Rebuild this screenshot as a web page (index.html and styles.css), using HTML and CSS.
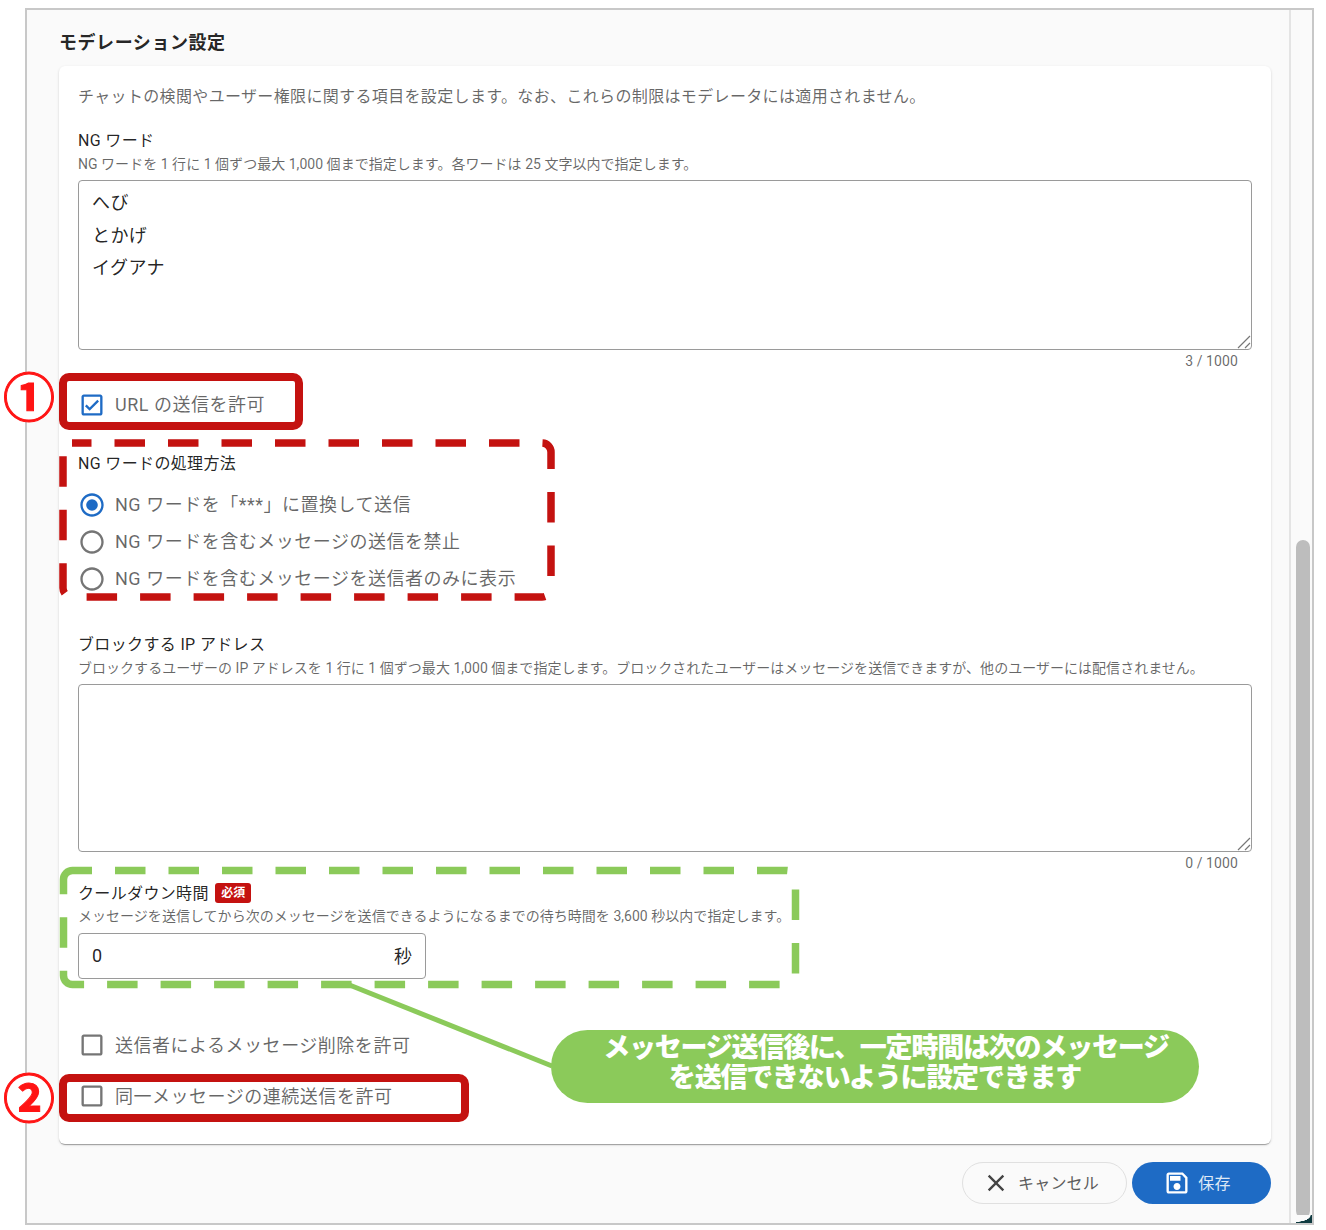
FILE: index.html
```html
<!DOCTYPE html>
<html lang="ja">
<head>
  <meta charset="UTF-8" />
  <meta name="viewport" content="width=device-width, initial-scale=1.0"/>
  <title>モデレーション設定</title>
  <link rel="stylesheet" href="styles.css">
</head>
<body>

  <div class="frame">
    <div class="main">
      <h2 class="page-title">モデレーション設定</h2>

      <div class="card">
        <p class="desc">チャットの検閲やユーザー権限に関する項目を設定します。なお、これらの制限はモデレータには適用されません。</p>

        <div class="field-label first-label">NG ワード</div>
        <div class="help">NG ワードを 1 行に 1 個ずつ最大 1,000 個まで指定します。各ワードは 25 文字以内で指定します。</div>
        <div class="box-wrap">
          <textarea class="text-box ng-box">へび
とかげ
イグアナ</textarea>
          <svg class="grip" viewBox="0 0 14 14"><path d="M1 13 13 1M8 13l5-5"/></svg>
        </div>
        <div class="counter">3 / 1000</div>

        <label class="option url-option">
          <svg class="icon blue" viewBox="0 0 24 24"><path d="M19 3H5c-1.1 0-2 .9-2 2v14c0 1.1.9 2 2 2h14c1.1 0 2-.9 2-2V5c0-1.1-.9-2-2-2zm0 16H5V5h14v14zM17.99 9l-1.41-1.42-6.59 6.59-2.58-2.57-1.42 1.41 4 3.99z"/></svg>
          <span>URL の送信を許可</span>
        </label>

        <div class="field-label method-label">NG ワードの処理方法</div>
        <div class="radios">
          <label class="option radio">
            <svg class="icon blue" viewBox="0 0 24 24"><path d="M12 2C6.48 2 2 6.48 2 12s4.48 10 10 10 10-4.48 10-10S17.52 2 12 2zm0 18c-4.42 0-8-3.58-8-8s3.58-8 8-8 8 3.58 8 8-3.58 8-8 8z"/><circle cx="12" cy="12" r="5"/></svg>
            <span>NG ワードを「***」に置換して送信</span>
          </label>
          <label class="option radio">
            <svg class="icon" viewBox="0 0 24 24"><path d="M12 2C6.48 2 2 6.48 2 12s4.48 10 10 10 10-4.48 10-10S17.52 2 12 2zm0 18c-4.42 0-8-3.58-8-8s3.58-8 8-8 8 3.58 8 8-3.58 8-8 8z"/></svg>
            <span>NG ワードを含むメッセージの送信を禁止</span>
          </label>
          <label class="option radio">
            <svg class="icon" viewBox="0 0 24 24"><path d="M12 2C6.48 2 2 6.48 2 12s4.48 10 10 10 10-4.48 10-10S17.52 2 12 2zm0 18c-4.42 0-8-3.58-8-8s3.58-8 8-8 8 3.58 8 8-3.58 8-8 8z"/></svg>
            <span>NG ワードを含むメッセージを送信者のみに表示</span>
          </label>
        </div>

        <div class="field-label ip-label">ブロックする IP アドレス</div>
        <div class="help">ブロックするユーザーの IP アドレスを 1 行に 1 個ずつ最大 1,000 個まで指定します。ブロックされたユーザーはメッセージを送信できますが、他のユーザーには配信されません。</div>
        <div class="box-wrap">
          <textarea class="text-box ip-box"></textarea>
          <svg class="grip" viewBox="0 0 14 14"><path d="M1 13 13 1M8 13l5-5"/></svg>
        </div>
        <div class="counter">0 / 1000</div>

        <div class="field-label cooldown-label">クールダウン時間 <span class="required">必須</span></div>
        <div class="help cooldown-help">メッセージを送信してから次のメッセージを送信できるようになるまでの待ち時間を 3,600 秒以内で指定します。</div>
        <div class="number-box"><span>0</span><span>秒</span></div>

        <label class="option delete-option">
          <svg class="icon" viewBox="0 0 24 24"><path d="M19 5v14H5V5h14m0-2H5c-1.1 0-2 .9-2 2v14c0 1.1.9 2 2 2h14c1.1 0 2-.9 2-2V5c0-1.1-.9-2-2-2z"/></svg>
          <span>送信者によるメッセージ削除を許可</span>
        </label>
        <label class="option repeat-option">
          <svg class="icon" viewBox="0 0 24 24"><path d="M19 5v14H5V5h14m0-2H5c-1.1 0-2 .9-2 2v14c0 1.1.9 2 2 2h14c1.1 0 2-.9 2-2V5c0-1.1-.9-2-2-2z"/></svg>
          <span>同一メッセージの連続送信を許可</span>
        </label>
      </div>

      <div class="actions">
        <button class="btn btn-cancel">
          <svg class="icon" viewBox="0 0 24 24"><path d="M19 6.41 17.59 5 12 10.59 6.41 5 5 6.41 10.59 12 5 17.59 6.41 19 12 13.41 17.59 19 19 17.59 13.41 12z"/></svg>
          <span>キャンセル</span>
        </button>
        <button class="btn btn-save">
          <svg class="icon" viewBox="0 0 24 24"><path d="M17 3H5c-1.11 0-2 .9-2 2v14c0 1.1.89 2 2 2h14c1.1 0 2-.9 2-2V7l-4-4zm2 16H5V5h11.17L19 7.83V19zm-7-7c-1.66 0-3 1.34-3 3s1.34 3 3 3 3-1.34 3-3-1.34-3-3-3zM6 6h9v4H6z"/></svg>
          <span>保存</span>
        </button>
      </div>
    </div>

    <div class="scroll-track"><div class="scroll-thumb"></div></div>
    <div class="corner"></div>
  </div>

  <!-- annotations drawn on top of the screenshot -->
  <svg class="marks" width="1326" height="1230" viewBox="0 0 1326 1230">
    <line class="green-line" x1="347" y1="984" x2="552" y2="1066"/>
    <rect class="dash-red" x="63" y="443" width="488" height="154" rx="9"/>
    <rect class="dash-green" x="63.500" y="870.500" width="732" height="114" rx="9"/>
  </svg>
  <div class="solid-box box-one"></div>
  <div class="solid-box box-two"></div>
  <div class="num num-one">①</div>
  <div class="num num-two">②</div>
  <div class="callout"><span class="callout-first">メッセージ送信後に、一定時間は次のメッセージ</span><br>を送信できないように設定できます</div>

</body>
</html>
```

FILE: styles.css
```css
:root {
  --text: rgba(0, 0, 0, 0.87);
  --muted: rgba(0, 0, 0, 0.6);
  --blue: #1e6bc5;
  --red: #c41210;
  --green: #8bca5a;
}

* {
  box-sizing: border-box;
}

body {
  margin: 0;
  background: #fff;
  font-family: Roboto, "Noto Sans CJK JP", sans-serif;
  color: var(--text);
}

.frame {
  position: relative;
  display: flex;
  width: 1289px;
  height: 1217px;
  margin: 8px 0 0 25px;
  background: #fafafa;
  border: 2px solid #c8c8c8;
}

.main {
  width: 1264px;
  padding: 20px 18px 0 32px;
  border-right: 2px solid #e4e4e4;
}

.page-title {
  margin: 0 0 10px;
  font-size: 18px;
  line-height: 26px;
  font-weight: 700;
  letter-spacing: 0.55px;
}

.card {
  height: 1078px;
  padding: 19px 19px 0;
  background: #fff;
  border-radius: 6px;
  box-shadow: 0 2px 1px -1px rgba(0, 0, 0, 0.2), 0 1px 1px rgba(0, 0, 0, 0.14), 0 1px 3px rgba(0, 0, 0, 0.12);
}

.desc {
  margin: 0;
  font-size: 16px;
  line-height: 24px;
  letter-spacing: 0.35px;
  color: var(--muted);
}

.field-label {
  font-size: 16px;
  line-height: 24px;
  letter-spacing: 0.35px;
}

.first-label { margin-top: 20px; }
.method-label { margin-top: 33px; }
.ip-label { margin-top: 36px; }
.cooldown-label { height: 24px; margin-top: 10px; }

.help {
  margin-top: 1px;
  font-size: 14px;
  line-height: 20px;
  letter-spacing: 0.03px;
  color: var(--muted);
}

.cooldown-help {
  margin-top: 0;
}

.box-wrap {
  position: relative;
  margin-top: 6px;
}

.text-box {
  display: block;
  width: 100%;
  padding: 6px 13px;
  font-family: inherit;
  font-size: 18px;
  line-height: 32.5px;
  letter-spacing: 0.4px;
  color: var(--text);
  background: #fff;
  border: 1px solid #9a9a9a;
  border-radius: 4px;
  outline: none;
  resize: none;
}

.ng-box { height: 170px; }
.ip-box { height: 168px; }

.grip {
  position: absolute;
  right: 1px;
  bottom: 1px;
  width: 14px;
  height: 14px;
  fill: none;
  stroke: #777;
  stroke-width: 1.2;
}

.counter {
  height: 20px;
  padding-right: 14px;
  text-align: right;
  font-size: 14px;
  line-height: 23px;
  letter-spacing: 0.1px;
  color: var(--muted);
}

.option {
  display: flex;
  align-items: center;
  gap: 9px;
  font-size: 18px;
  letter-spacing: 0.52px;
  color: var(--muted);
}

/* CJK glyphs sit a bit low next to the icons */
.option span {
  margin-top: -3px;
}

.icon {
  flex: none;
  width: 28px;
  height: 28px;
  fill: #757575;
}

.icon.blue {
  fill: var(--blue);
}

.url-option { height: 28px; margin-top: 21px; }
.url-option span { margin-top: -5px; }
.delete-option { height: 28px; margin-top: 52px; }
.repeat-option { height: 28px; margin-top: 23px; }

.radios {
  margin-top: 10px;
}

.radio {
  height: 37px;
}

.required {
  display: inline-block;
  margin-left: 2px;
  padding: 0 6px;
  font-size: 12px;
  line-height: 20px;
  font-weight: 700;
  letter-spacing: 0;
  color: #fff;
  background: var(--red);
  border-radius: 3px;
  vertical-align: 2px;
}

.number-box {
  display: flex;
  align-items: center;
  justify-content: space-between;
  width: 348px;
  height: 46px;
  margin-top: 7px;
  padding: 0 13px 2px;
  font-size: 18px;
  background: #fff;
  border: 1px solid #9a9a9a;
  border-radius: 4px;
}

.actions {
  display: flex;
  justify-content: flex-end;
  gap: 5px;
  margin-top: 18px;
}

.btn {
  display: flex;
  align-items: center;
  justify-content: center;
  height: 42px;
  padding: 0 9px 0 0;
  font-family: inherit;
  font-size: 16px;
  letter-spacing: 0.2px;
  border-radius: 21px;
  cursor: pointer;
}

.btn span {
  margin-top: -2px;
}

.btn-cancel {
  gap: 8px;
  width: 165px;
  color: #5c5c5c;
  background: #fafafa;
  border: 1px solid #e0e0e0;
}

.btn-cancel .icon {
  margin-left: 1px;
  fill: #444;
}

.btn-save {
  gap: 7px;
  width: 139px;
  color: #dfe9f6;
  background: var(--blue);
  border: none;
}

.btn-save .icon {
  fill: #fff;
}

.scroll-track {
  flex: 1;
  padding: 530px 0 0 5px;
}

.scroll-thumb {
  width: 14px;
  height: 678px;
  background: #bdbdbd;
  border-radius: 7px;
}

.corner {
  position: absolute;
  right: 0;
  bottom: 0;
  width: 16px;
  height: 8px;
  background: radial-gradient(ellipse 15px 7px at 0 0, #fafafa 95%, #0f3a40 100%);
}

/* annotation layer */
.marks {
  position: absolute;
  top: 0;
  left: 0;
  pointer-events: none;
}

.green-line {
  stroke: var(--green);
  stroke-width: 5;
}

.dash-red,
.dash-green {
  fill: none;
  stroke-width: 7.5;
  stroke-dasharray: 30.5 23;
  stroke-dashoffset: 11;
}

.dash-red { stroke: var(--red); }
.dash-green { stroke: var(--green); }

.solid-box {
  position: absolute;
  border: 8px solid var(--red);
  border-radius: 10px;
}

.box-one {
  top: 373px;
  left: 59px;
  width: 244px;
  height: 57px;
}

.box-two {
  top: 1074px;
  left: 59px;
  width: 410px;
  height: 48px;
}

.num {
  position: absolute;
  left: 3px;
  width: 52px;
  height: 50px;
  font-size: 52px;
  line-height: 55px;
  font-weight: 700;
  text-align: center;
  color: #ff1414;
  -webkit-text-stroke: 1px #ff1414;
  background: #fff;
  border-radius: 50%;
}

.num-one { top: 372px; }
.num-two { top: 1073px; }

.callout {
  position: absolute;
  top: 1030px;
  left: 551px;
  width: 648px;
  height: 73px;
  padding-top: 3px;
  text-align: center;
  font-size: 27px;
  line-height: 30px;
  font-weight: 900;
  letter-spacing: -1.2px;
  color: #fff;
  background: var(--green);
  border-radius: 37px;
}

.callout-first {
  margin-left: 22px;
}
```
